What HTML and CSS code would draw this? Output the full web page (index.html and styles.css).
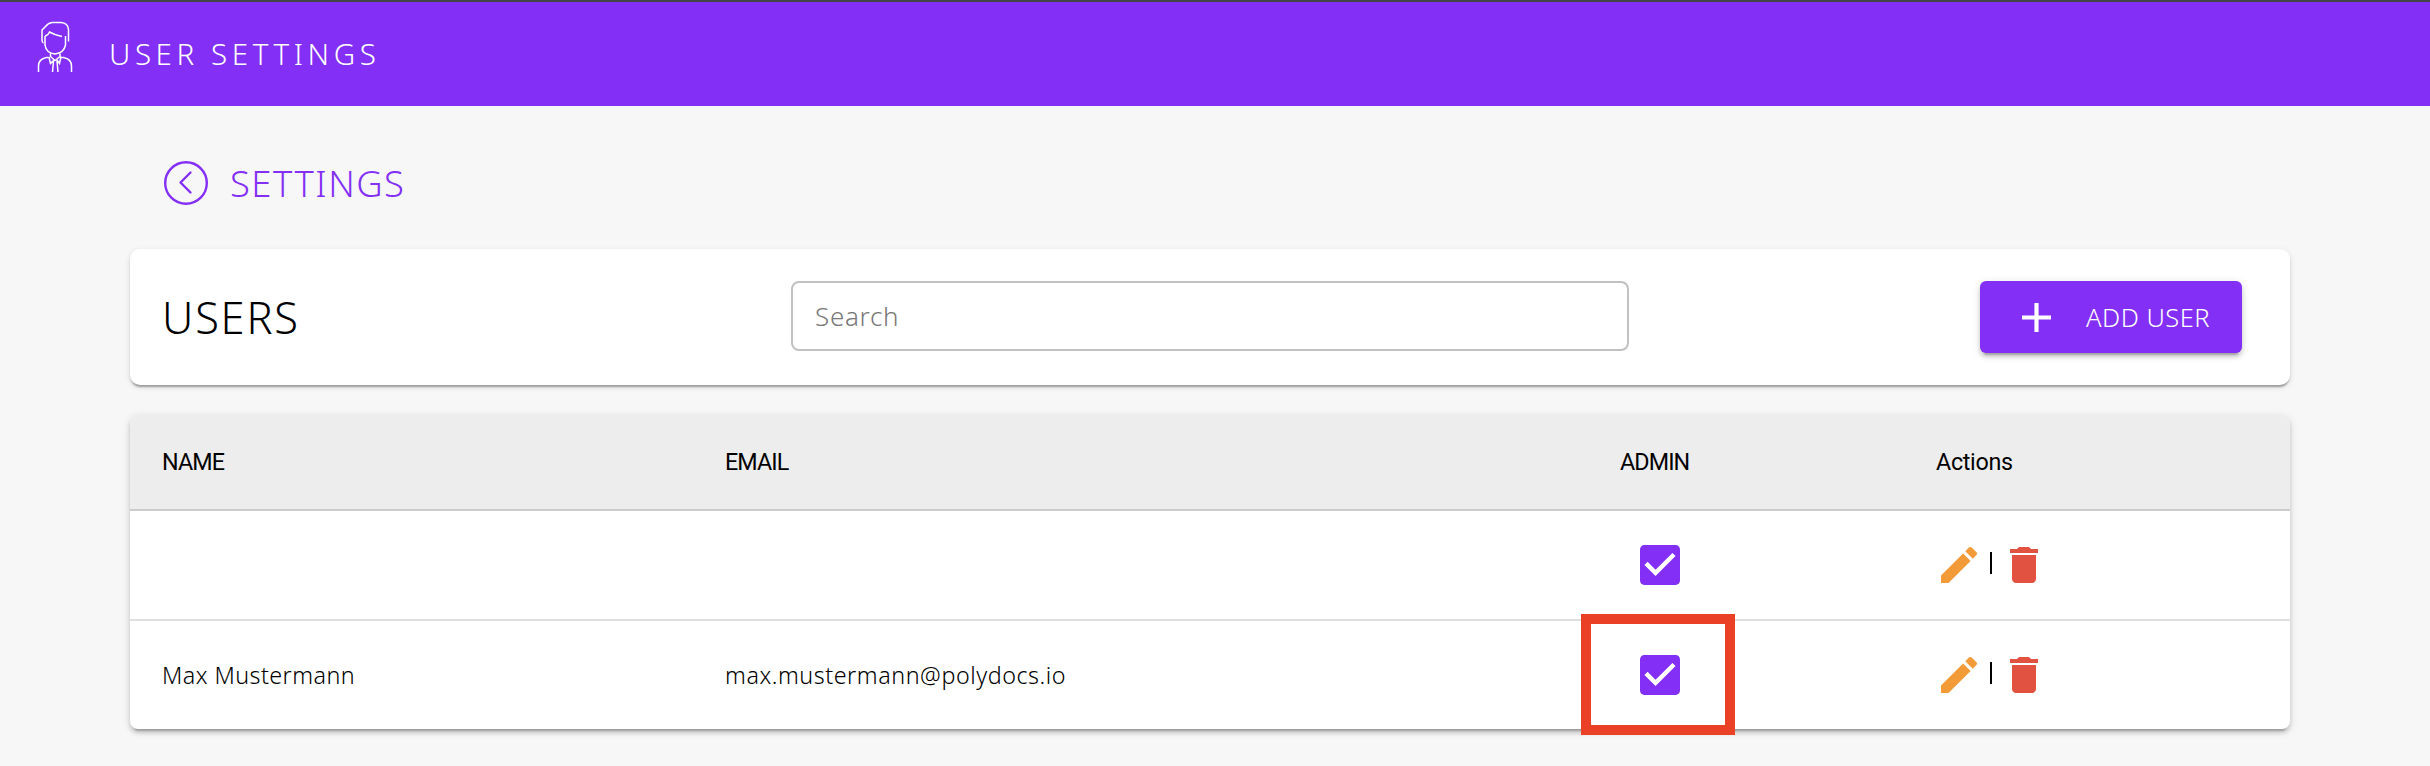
FILE: index.html
```
<!DOCTYPE html>
<html lang="en">
<head>
<meta charset="utf-8">
<title>User Settings</title>
<link rel="stylesheet" href="styles.css">
</head>
<body>
<svg class="sprite" aria-hidden="true">
  <symbol id="check" viewBox="3 3 18 18"><path d="M19 3H5c-1.11 0-2 .9-2 2v14c0 1.1.89 2 2 2h14c1.11 0 2-.9 2-2V5c0-1.1-.89-2-2-2zm-9 14l-5-5 1.41-1.41L10 14.17l7.59-7.59L19 8l-9 9z"/></symbol>
  <symbol id="pencil" viewBox="3 3 18 18"><path d="M3 17.25V21h3.75L17.81 9.94l-3.75-3.75L3 17.25zM20.71 7.04c.39-.39.39-1.02 0-1.41l-2.34-2.34c-.39-.39-1.02-.39-1.41 0l-1.83 1.83 3.75 3.75 1.83-1.83z"/></symbol>
  <symbol id="trash" viewBox="5 3 14 18"><path d="M6 19c0 1.1.9 2 2 2h8c1.1 0 2-.9 2-2V7H6v12zM19 4h-3.5l-1-1h-5l-1 1H5v2h14V4z"/></symbol>
</svg>
<header class="topbar">
  <svg class="avatar" viewBox="38 22 34 50">
    <path d="M43.500 43q-1.500-1-1.500-3v-10l3-3q3-4 7-4.500h9q7 .5 7.500 7v12"/>
    <path d="M45 36v9q1 8 10 9 9-1 10.500-9v-9M45 36q3-.5 4.500-4 5 3 12.500 4.500"/>
    <path d="M38.500 72v-6q0-7 8-8.500h2M71.500 72v-6q0-7-8-8.500h-3M50.500 53.500v3l4.500 4 5-4v-3M49 57l1.500 6.500 4-4M61 56.500l-1.500 7-3-4M52.500 72l1-11M58 72l-1-11"/>
  </svg>
  <h1 class="topbar-title">USER SETTINGS</h1>
</header>
<main class="page">
  <a class="back">
    <svg class="back-icon" viewBox="0 0 44 44"><circle cx="22" cy="22" r="20.800"/><path d="M26.500 11.500 16.500 21.500l10 10"/></svg>
    <span>SETTINGS</span>
  </a>
  <section class="toolbar">
    <h2 class="toolbar-title">USERS</h2>
    <input class="search" type="text" placeholder="Search">
    <button class="add"><svg class="plus" viewBox="5 5 14 14"><path d="M19 13h-6v6h-2v-6H5v-2h6V5h2v6h6v2z"/></svg><span>ADD USER</span></button>
  </section>
  <section class="table">
    <div class="row head"><div>NAME</div><div>EMAIL</div><div>ADMIN</div><div>Actions</div></div>
    <div class="row">
      <div></div><div></div>
      <div><svg class="check"><use href="#check"/></svg></div>
      <div class="actions"><svg class="pencil"><use href="#pencil"/></svg><span class="divider"></span><svg class="trash"><use href="#trash"/></svg></div>
    </div>
    <div class="row">
      <div>Max Mustermann</div><div class="email">max.mustermann@polydocs.io</div>
      <div class="marked"><svg class="check"><use href="#check"/></svg></div>
      <div class="actions"><svg class="pencil"><use href="#pencil"/></svg><span class="divider"></span><svg class="trash"><use href="#trash"/></svg></div>
    </div>
  </section>
</main>
</body>
</html>
```
FILE: styles.css
```
*, *::after { box-sizing: border-box; }
body { margin: 0; height: 766px; overflow: hidden; background: #f7f7f7; color: #000; font-family: "Noto Sans", sans-serif; font-weight: 300; }
h1, h2 { margin: 0; font-weight: 300; }
svg { display: block; flex: none; }
.sprite { display: none; }
.topbar { display: flex; height: 106px; padding-left: 38px; border-top: 2px solid #444; background: #832ff5; color: #fff; }
.avatar { width: 34px; height: 50px; margin-top: 20px; overflow: visible; fill: none; stroke: #fff; stroke-width: 1.5; }
.topbar-title { margin-left: 37px; font-size: 29.5px; line-height: 104px; letter-spacing: 4.6px; }
.page { padding: 55px 140px 0 130px; }
.back { display: flex; align-items: center; gap: 22px; width: max-content; height: 44px; margin-left: 34px; color: #832ff5; font-size: 36.4px; letter-spacing: 1.5px; }
.back-icon { width: 44px; height: 44px; fill: none; stroke: #832ff5; stroke-width: 2.4; stroke-linecap: round; stroke-linejoin: round; }
.toolbar { display: grid; grid-template-columns: 629px 838px 1fr; align-items: center; height: 136px; margin-top: 44px; padding: 0 48px 0 32px; border-radius: 10px; background: #fff; box-shadow: 0 4px 2px -2px rgba(0,0,0,.2), 0 2px 2px rgba(0,0,0,.14), 0 2px 6px rgba(0,0,0,.12); }
.toolbar-title { padding-top: 2px; font-size: 43.4px; line-height: 60px; letter-spacing: 1.8px; }
.search { width: 838px; height: 70px; margin-bottom: 2px; padding: 0 22px; border: 2px solid #c1c1c1; border-radius: 8px; background: #fff; font: 300 26px "Noto Sans", sans-serif; letter-spacing: .7px; }
.search::placeholder { color: #777; opacity: 1; }
.add { display: flex; align-items: center; justify-self: end; width: 262px; height: 72px; padding: 0 0 0 42px; border: 0; border-radius: 6px; background: #832ff5; color: #fff; font: 300 25.5px "Noto Sans", sans-serif; letter-spacing: .5px; box-shadow: 0 6px 2px -4px rgba(0,0,0,.2), 0 4px 4px rgba(0,0,0,.14), 0 2px 10px rgba(0,0,0,.12); }
.add span { margin-left: 35px; }
.plus { width: 29px; height: 29px; fill: #fff; }
.table { height: 314px; margin-top: 30px; border-radius: 8px; background: #fff; box-shadow: 0 6px 2px -4px rgba(0,0,0,.2), 0 4px 4px rgba(0,0,0,.14), 0 2px 10px rgba(0,0,0,.12); }
.row { display: grid; grid-template-columns: 562px 895px 316px 387px; align-items: center; height: 110px; border-bottom: 2px solid #e0e0e0; font-size: 23.3px; letter-spacing: .45px; }
.row > div { padding-left: 32px; }
.row > div:nth-child(2) { padding-left: 33px; }
.row:last-child { height: 108px; border-bottom: 0; }
.head { height: 96px; border-bottom-color: #ccc; border-radius: 8px 8px 0 0; background: #ededed; font-family: Roboto, sans-serif; font-weight: 400; letter-spacing: -.9px; }
.head > div:nth-child(3) { padding-left: 33px; }
.head > div:last-child { padding-left: 33px; letter-spacing: -.3px; }
.row > .email { letter-spacing: .55px; }
.check { width: 40px; height: 40px; margin-left: 21px; fill: #832ff5; }
.marked { position: relative; }
.marked::after { content: ""; position: absolute; left: -6px; top: -41px; width: 154px; height: 121px; border: 10px solid #ea4025; }
.actions { display: flex; }
.pencil { width: 36px; height: 36px; margin-left: 6px; fill: #f29b38; }
.divider { width: 1.5px; height: 22px; margin: 5px 18px 0 13px; background: #000; }
.trash { width: 28px; height: 36px; fill: #e25241; }
```
